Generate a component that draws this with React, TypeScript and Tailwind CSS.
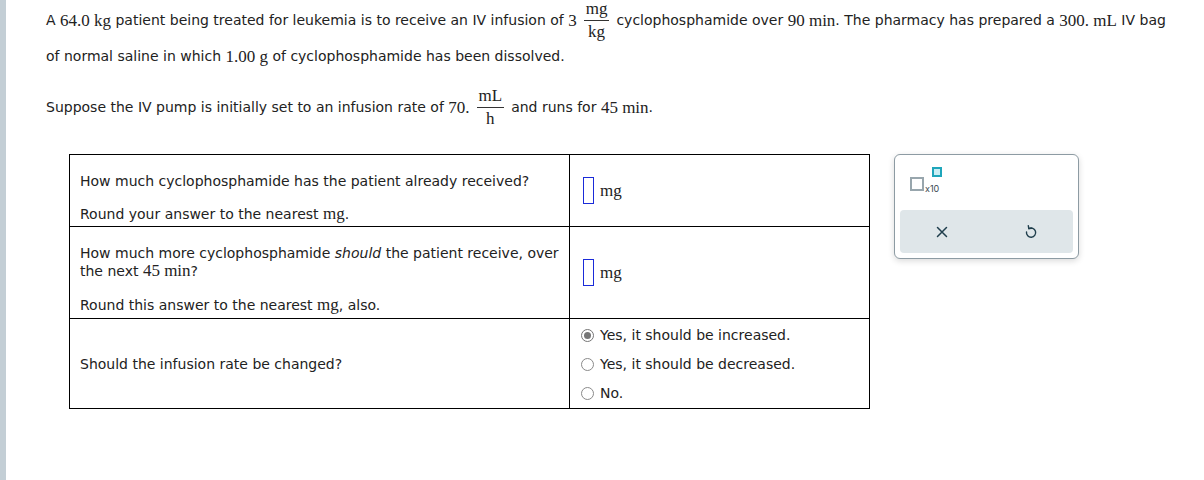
import React from "react";

const SANS = "font-['DejaVu_Sans',Verdana,sans-serif] text-[14px]";
const SERIF = "font-['Liberation_Serif',serif] text-[17px]";

function M({ children }: { children: React.ReactNode }) {
  return <span className={`${SERIF} leading-none`}>{children}</span>;
}

function Frac({ n, d }: { n: string; d: string }) {
  return (
    <span className={`inline-flex flex-col items-center ml-[7px] mr-[7px] ${SERIF} leading-[20px]`}>
      <span className="px-[2px] pb-[1px]">{n}</span>
      <span className="self-stretch border-t border-[#333] text-center px-[2px] pt-[1px]">{d}</span>
    </span>
  );
}

function AnswerBox() {
  return (
    <div className="flex items-center gap-[6px] pl-[13px]">
      <span className="inline-block w-[11px] h-[27px] border border-[#1a2bd9]" />
      <M>mg</M>
    </div>
  );
}

function Radio({ checked, label }: { checked?: boolean; label: string }) {
  return (
    <div className="flex items-center h-[30px] pl-[11px] gap-[6px]">
      <span
        className={`flex items-center justify-center w-[13px] h-[13px] rounded-full border ${
          checked ? "border-[#767676]" : "border-[#8a8a8a]"
        } bg-white`}
      >
        {checked && <span className="w-[7px] h-[7px] rounded-full bg-[#767676]" />}
      </span>
      <span>{label}</span>
    </div>
  );
}

export default function App() {
  return (
    <div className={`flex w-[1204px] h-[480px] bg-white text-[#222] ${SANS}`}>
      <div className="w-[6px] h-full bg-[#c3ced5] shrink-0" />
      <div className="pl-[40px] flex flex-col">
        <div className="flex items-center h-[41px] whitespace-nowrap">
          <span>A&nbsp;</span>
          <M>64.0 kg</M>
          <span>&nbsp;patient being treated for leukemia is to receive an IV infusion of&nbsp;</span>
          <M>3</M>
          <Frac n="mg" d="kg" />
          <span>cyclophosphamide over&nbsp;</span>
          <M>90 min</M>
          <span>. The pharmacy has prepared a&nbsp;</span>
          <M>300. mL</M>
          <span>&nbsp;IV bag</span>
        </div>
        <div className="flex items-center h-[30px] whitespace-nowrap">
          <span>of normal saline in which&nbsp;</span>
          <M>1.00 g</M>
          <span>&nbsp;of cyclophosphamide has been dissolved.</span>
        </div>
        <div className="flex items-center h-[44px] mt-[14px] whitespace-nowrap">
          <span>Suppose the IV pump is initially set to an infusion rate of&nbsp;</span>
          <M>70.</M>
          <Frac n="mL" d="h" />
          <span>and runs for&nbsp;</span>
          <M>45 min</M>
          <span>.</span>
        </div>

        <div className="flex items-start mt-[25px] ml-[23px] gap-[24px]">
          <div className="w-[801px] border border-black">
            <div className="flex h-[71px]">
              <div className="w-[500px] border-r border-black pl-[10px] pt-[17px]">
                <p className="leading-[18px]">How much cyclophosphamide has the patient already received?</p>
                <p className="leading-[18px] mt-[15px]">
                  Round your answer to the nearest <M>mg</M>.
                </p>
              </div>
              <div className="flex-1 flex items-center">
                <AnswerBox />
              </div>
            </div>
            <div className="flex h-[92px] border-t border-black">
              <div className="w-[500px] border-r border-black pl-[10px] pr-[6px] pt-[17px]">
                <p className="leading-[18px]">
                  How much more cyclophosphamide <i>should</i> the patient receive, over the next <M>45 min</M>?
                </p>
                <p className="leading-[18px] mt-[16px]">
                  Round this answer to the nearest <M>mg</M>, also.
                </p>
              </div>
              <div className="flex-1 flex items-center">
                <AnswerBox />
              </div>
            </div>
            <div className="flex h-[90px] border-t border-black">
              <div className="w-[500px] border-r border-black pl-[10px] flex items-center pt-[1px]">
                <p>Should the infusion rate be changed?</p>
              </div>
              <div className="flex-1 flex flex-col justify-center pt-[2px]">
                <Radio checked label="Yes, it should be increased." />
                <Radio label="Yes, it should be decreased." />
                <Radio label="No." />
              </div>
            </div>
          </div>

          <div className="w-[185px] h-[105px] border border-[#8d9ba3] rounded-[6px] shadow-[0_2px_6px_rgba(0,0,0,0.15)] bg-white flex flex-col p-[5px]">
            <div className="flex-1 relative">
              <span className="absolute left-[10px] top-[17px] w-[14px] h-[14px] border-2 border-[#98a6ad]" />
              <span className="absolute left-[25px] top-[24px] text-[9px] leading-none font-['Inter',sans-serif] text-[#3b4a52]">x10</span>
              <span className="absolute left-[32px] top-[7px] w-[10px] h-[10px] border-2 border-[#1fa6bb] bg-[#c9eef4]" />
            </div>
            <div className="h-[43px] bg-[#dfe6e9] rounded-[4px] flex">
              <div className="flex-1 flex items-center justify-center pr-[6px]">
                <svg width="14" height="14" viewBox="0 0 14 14" fill="none" stroke="#1f3e4c" strokeWidth="1.5" strokeLinecap="round">
                  <path d="M2.5 2.5 L11.5 11.5 M11.5 2.5 L2.5 11.5" />
                </svg>
              </div>
              <div className="flex-1 flex items-center justify-center">
                <svg width="14" height="15" viewBox="0 0 14 15" fill="none" stroke="#1f3e4c" strokeWidth="1.4" strokeLinecap="round" strokeLinejoin="round">
                  <path d="M4.8 4.6 A4.6 4.6 0 1 1 2.5 8" />
                  <path d="M4.3 1.6 L4.8 4.6 L7.8 4.2" />
                </svg>
              </div>
            </div>
          </div>
        </div>
      </div>
    </div>
  );
}
